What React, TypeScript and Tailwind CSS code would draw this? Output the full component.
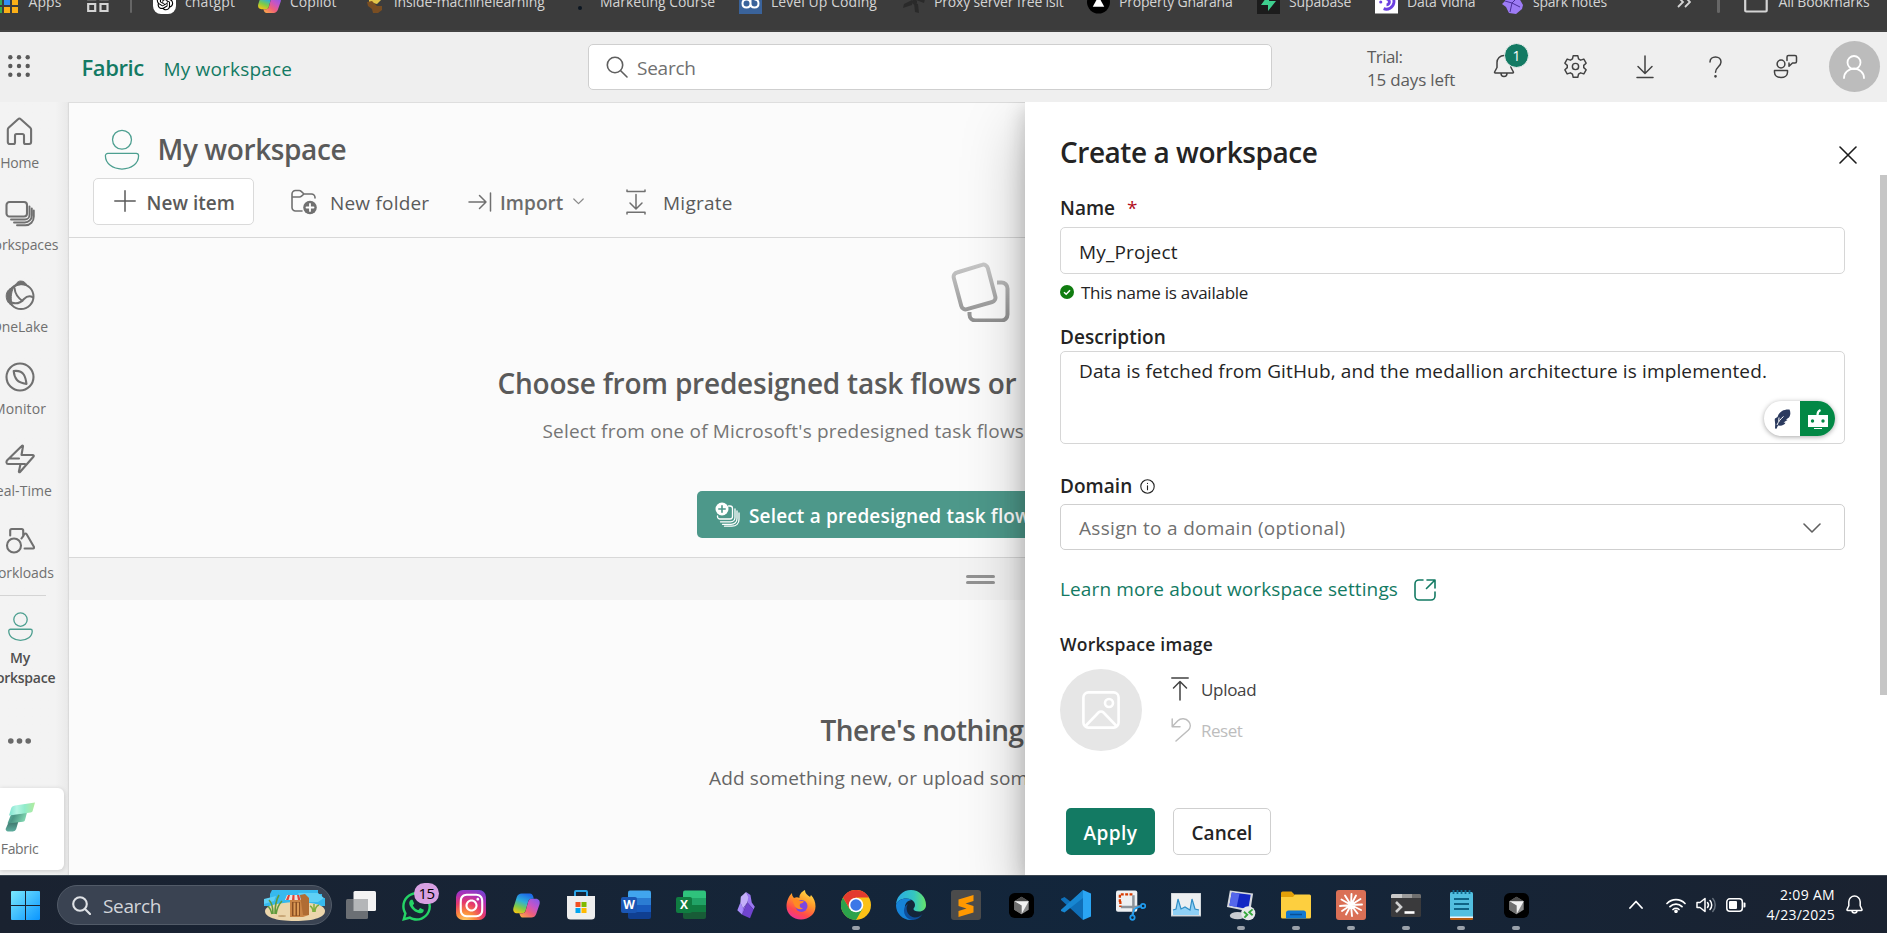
import type { ReactNode } from "react";
import { FaWhatsapp, FaInstagram } from "react-icons/fa";
import { RiOpenaiFill } from "react-icons/ri";

type IconProps = { className: string; box: string; sw?: number; children: ReactNode };

function Line({ className, box, sw = 1.5, children }: IconProps) {
  return (
    <svg className={"shrink-0 " + className} viewBox={box} fill="none" stroke="currentColor" strokeWidth={sw} strokeLinecap="round" strokeLinejoin="round">
      {children}
    </svg>
  );
}

function CopilotMark({ className, id }: { className: string; id: string }) {
  return (
    <svg className={"shrink-0 " + className} viewBox="0 0 30 30">
      <defs>
        <linearGradient id={id + "a"} x1="0.6" y1="0" x2="0.2" y2="1">
          <stop offset="0" stopColor="#1d6be8" />
          <stop offset="0.4" stopColor="#2fb0d8" />
          <stop offset="0.7" stopColor="#7ccb4a" />
          <stop offset="1" stopColor="#f3c614" />
        </linearGradient>
        <linearGradient id={id + "b"} x1="1" y1="0" x2="0.2" y2="1">
          <stop offset="0" stopColor="#7a5cf0" />
          <stop offset="0.4" stopColor="#c455c8" />
          <stop offset="0.7" stopColor="#f0607a" />
          <stop offset="1" stopColor="#f9a04c" />
        </linearGradient>
      </defs>
      <path d="M10 2.500h8.500c1.800 0 2.800 1.200 3.300 2.800l.7 2.700h-2.400c-1.800 0-2.800.9-3.300 2.700l-2.700 9.600c-.5 1.800-1.500 2.700-3.200 2.700H5.400C2.300 23 .6 20.700 1.500 17.200L5 6.200C5.800 3.700 7.700 2.500 10 2.500z" fill={"url(#" + id + "a)"} />
      <path d="M20 27.500h-8.500c-1.800 0-2.800-1.200-3.300-2.800L7.500 23h3.400c1.800 0 2.800-.9 3.300-2.700l2.700-9.600c.5-1.800 1.500-2.700 3.200-2.700h4.500c3.100 0 4.800 2.300 3.900 5.800L25 23.800c-.8 2.500-2.700 3.700-5 3.700z" fill={"url(#" + id + "b)"} />
    </svg>
  );
}

function CrystalMark({ className }: { className: string }) {
  return (
    <svg className={"shrink-0 " + className} viewBox="0 0 24 32">
      <path d="M11.500 1 5.500 6.500 5 13l3 7 5-7 2-6z" fill="#c4b0fa" />
      <path d="M11.500 1 16.500 4.500 18 13l3.500 5-1.500 3-7-8 1-6z" fill="#9a78f0" />
      <path d="M5 13 1.500 22l5.500 5 2-6z" fill="#a88bfa" />
      <path d="m13 13-6 14 9 4 4-10z" fill="#7044cf" />
      <path d="M13 13 8 20l-1 7z" fill="#8b5fe6" />
    </svg>
  );
}

function Bookmark({ label, width, tracking, icon }: { label: string; width: string; tracking: string; icon: ReactNode }) {
  return (
    <div className={"flex h-[24px] shrink-0 items-center gap-[9px] " + width}>
      <div className="flex size-[23px] shrink-0 items-center justify-center">{icon}</div>
      <span className={tracking}>{label}</span>
    </div>
  );
}

function BookmarksBar() {
  return (
    <div className="h-8 shrink-0 overflow-hidden border-b-2 border-[#444] bg-[#3c3c3c] text-[14px] leading-[24px] whitespace-nowrap text-[#d4d4d4]">
      <div className="-mt-[10px] flex h-[24px] items-center">
        <svg className="-ml-[4px] h-[22px] w-[22px] shrink-0" viewBox="0 0 22 22">
          <path d="M0 0h6v6H0zM0 8h6v6H0z" fill="#34a853" />
          <path d="M8 0h6v6H8z" fill="#ea4335" />
          <path d="M8 8h6v6H8z" fill="#2f8ff5" />
          <path d="M16 0h6v6h-6z" fill="#34a853" />
          <path d="M16 8h6v6h-6zM8 16h6v6H8zM16 16h6v6h-6z" fill="#fbaf17" />
          <path d="M0 16h6v6H0z" fill="#34a853" />
        </svg>
        <span className="ml-[10.500px] w-[58px] tracking-[0.09px]">Apps</span>
        <svg className="h-[22px] w-[22px] shrink-0" viewBox="0 0 22 22" fill="none" stroke="#d4d4d4" strokeWidth="2.200">
          <path d="M1.200 1.200h7v7h-7zM13.500 1.200h7v7h-7zM1.200 13h7v7h-7zM13.500 13h7v7h-7z" />
        </svg>
        <div className="mr-[21px] ml-[21px] h-[22px] w-[2.500px] shrink-0 rounded bg-[#666]" />
        <Bookmark label="chatgpt" width="w-[105px]" tracking="tracking-[0.11px]" icon={<div className="flex size-[23px] items-center justify-center rounded-[8px] bg-white text-black"><RiOpenaiFill size={20} /></div>} />
        <Bookmark label="Copilot" width="w-[104px]" tracking="tracking-[0.03px]" icon={<CopilotMark className="size-[25px]" id="bm" />} />
        <Bookmark label="inside-machinelearning" width="w-[206px]" tracking="tracking-[-0.08px]" icon={
          <svg className="size-[22px]" viewBox="0 0 22 22"><path d="M6 2h9l3 7-4 4-8-2z" fill="#e3c548" /><path d="m4 11 5-1 5 5 5 0 0 4-4 3-5 0-1-4-4-3z" fill="#7a4e22" /></svg>
        } />
        <Bookmark label="Marketing Course" width="w-[171px]" tracking="tracking-[-0.05px]" icon={<div className="mt-[12px] size-[4px] rounded-full bg-[#0b1622]" />} />
        <Bookmark label="Level Up Coding" width="w-[163px]" tracking="tracking-[0.06px]" icon={
          <svg className="size-[23px]" viewBox="0 0 23 23"><path d="M0 0h23v23H0z" fill="#3a639b" /><path d="M11.500 8v4.500c0 2.500-1.600 4-4 4s-4-1.500-4-4 1.600-4 4-4 4 1.500 4 4 1.600 4 4 4 4-1.500 4-4-1.600-4-4-4" fill="none" stroke="#fff" strokeWidth="2" /></svg>
        } />
        <Bookmark label="Proxy server free lsit" width="w-[185px]" tracking="tracking-[-0.18px]" icon={
          <svg className="size-[23px]" viewBox="0 0 23 23" fill="#2a2a2a"><path d="M10 9 2 13l-1 4 9-3zM12 12l1 9 4 1-1-9zM14 9l8 3 1-4-8-3z" /><circle cx="12.500" cy="11" r="2.500" /></svg>
        } />
        <Bookmark label="Property Gharana" width="w-[170px]" tracking="tracking-[-0.2px]" icon={
          <svg className="size-[24px]" viewBox="0 0 24 24"><circle cx="12" cy="12" r="12" fill="#000" /><path d="m12 6 6 11H6z" fill="#fff" /></svg>
        } />
        <Bookmark label="Supabase" width="w-[118px]" tracking="tracking-[-0.15px]" icon={
          <svg className="size-[23px]" viewBox="0 0 23 23"><path d="M0 0h23v23H0z" fill="#1c1c1c" /><path d="M12 3v7h7l-8 10v-6H4z" fill="#3ecf8e" /></svg>
        } />
        <Bookmark label="Data Vidha" width="w-[126px]" tracking="tracking-[-0.28px]" icon={
          <svg className="size-[24px]" viewBox="0 0 24 24"><path d="M0 0h24v24H0z" fill="#fff" /><path d="M12 3.500a8 8 0 1 1-3 15.500M12 9a3 3 0 1 1 0 6" fill="none" stroke="#6b3fe0" strokeWidth="3" /><circle cx="6" cy="12" r="1.600" fill="#6b3fe0" /><circle cx="9" cy="7" r="1.300" fill="#6b3fe0" /></svg>
        } />
        <Bookmark label="spark notes" width="w-[176px]" tracking="tracking-[-0.22px]" icon={
          <svg className="size-[23px]" viewBox="0 0 23 23"><path d="M9 0 4 5v5l-3 3 4 3 3 6 7 1 6-5 1-4-4-7-4-5z" fill="#9d7bf5" /><path d="m4 10 7 2 5-5M11 12l-2 9M11 12l8 4" stroke="#4a2e9a" strokeWidth="1" fill="none" /></svg>
        } />
        <svg className="h-[14px] w-[14px] shrink-0" viewBox="0 0 14 14" fill="none" stroke="#d4d4d4" strokeWidth="1.800"><path d="m1 2 5 5-5 5M8 2l5 5-5 5" /></svg>
        <div className="ml-[26px] h-[22px] w-[2.500px] shrink-0 rounded bg-[#666]" />
        <svg className="mt-[1px] mr-[11px] ml-[24px] h-[20px] w-[24px] shrink-0" viewBox="0 0 24 20" fill="none" stroke="#d4d4d4" strokeWidth="2.200"><path d="M1.200 17.500V2h8l2.500 3h11v12.500a1 1 0 0 1-1 1H2.200a1 1 0 0 1-1-1z" /></svg>
        <span className="tracking-[-0.18px]">All Bookmarks</span>
      </div>
    </div>
  );
}

function Header() {
  return (
    <header className="flex h-[70px] shrink-0 items-start bg-[#efefef] text-[19px] whitespace-nowrap">
      <svg className="mt-[23px] ml-[8px] size-[22px] shrink-0 fill-[#5a5a5a]" viewBox="0 0 22 22">
        {[2.3, 11, 19.7].map((y) => [2.3, 11, 19.7].map((x) => <circle key={x + "-" + y} cx={x} cy={y} r="2.200" />))}
      </svg>
      <span className="mt-[21px] ml-[51.500px] w-[82px] text-[22px] leading-[28px] font-semibold tracking-[-0.4px] text-[#137a63]">Fabric</span>
      <span className="mt-[25px] w-[424.500px] leading-[24px] tracking-[0.18px] text-[#137a63]">My workspace</span>
      <div className="mt-[12px] flex h-[46px] w-[684px] shrink-0 items-center rounded-[5px] border border-[#cfcfcf] bg-white">
        <Line className="ml-[17px] size-[22px] text-[#5f5f5f]" box="0 0 22 22" sw={1.6}><circle cx="9" cy="9" r="7.700" /><path d="m14.700 14.700 6.300 6.300" /></Line>
        <span className="ml-[9px] pt-px leading-[24px] tracking-[-0.24px] text-[#707070]">Search</span>
      </div>
      <div className="mt-[13px] ml-[95px] w-[126px] text-[17px] leading-[23px] text-[#5c5c5c]">
        <div className="tracking-[-0.55px]">Trial:</div>
        <div className="tracking-[-0.18px]">15 days left</div>
      </div>
      <div className="relative mt-[22px] h-[24px] w-[22px] shrink-0">
        <Line className="h-[24px] w-[22px] text-[#424242]" box="0 0 22 24"><path d="M11 1.500a7 7 0 0 0-7 7v5L1.600 18a.7.7 0 0 0 .6 1h17.600a.7.7 0 0 0 .6-1L18 13.500v-5a7 7 0 0 0-7-7zM8 19.200c0 2 1.300 3.300 3 3.300s3-1.300 3-3.300" /></Line>
        <span className="absolute -top-[11px] left-[11px] flex size-[25px] items-center justify-center rounded-full border border-[#efefef] bg-[#137a63] text-[14px] leading-none text-white">1</span>
      </div>
      <Line className="mt-[22px] ml-[47.500px] size-[25px] text-[#424242]" box="0 0 24 24" sw={1.4}>
        <path d="M9.800 1.600 L14.200 1.600 L14.900 4.700 L16.900 5.900 L20 4.900 L22.200 8.800 L19.900 10.900 L19.900 13.100 L22.200 15.200 L20 19.100 L16.900 18.100 L14.900 19.300 L14.200 22.400 L9.800 22.400 L9.100 19.300 L7.100 18.100 L4 19.100 L1.800 15.200 L4.100 13.100 L4.100 10.900 L1.800 8.800 L4 4.900 L7.100 5.900 L9.100 4.700z" />
        <circle cx="12" cy="12" r="3" />
      </Line>
      <Line className="mt-[23px] ml-[48px] h-[24px] w-[18px] text-[#424242]" box="0 0 18 24"><path d="M9 1v17M2 11.500l7 7 7-7M1 22.500h16" /></Line>
      <Line className="mt-[24px] ml-[55px] h-[22px] w-[13px] text-[#424242]" box="0 0 13 22"><path d="M1 6c0-3 2.300-5 5.500-5S12 3 12 6c0 4.500-5.500 5-5.500 10.200" /><circle cx="6.500" cy="20.300" r=".6" fill="currentColor" /></Line>
      <Line className="mt-[22px] ml-[51px] size-[25px] text-[#424242]" box="0 0 25 25"><circle cx="8" cy="10" r="3.900" /><path d="M1.500 16.500h13v1.700c0 3.400-3 5.300-6.500 5.300s-6.500-1.900-6.500-5.300zM14 6.500V3a1.500 1.500 0 0 1 1.500-1.500H22A1.500 1.500 0 0 1 23.500 3v4.500A1.500 1.500 0 0 1 22 9h-2.500L16 12.300V9" /></Line>
      <div className="mt-[9px] ml-[31px] flex size-[51px] shrink-0 items-center justify-center rounded-full bg-[#bcbcbc]">
        <Line className="h-[24px] w-[22px] text-white" box="0 0 22 24" sw={1.8}><circle cx="11" cy="7.500" r="6.500" /><path d="M1 23a10 9.500 0 0 1 20 0" /></Line>
      </div>
    </header>
  );
}

function PersonIcon({ className, sw }: { className: string; sw: number }) {
  return (
    <Line className={className} box="0 0 36 42" sw={sw}>
      <circle cx="18" cy="11" r="9.700" />
      <path d="M3.500 25h29a2.500 2.500 0 0 1 2.500 2.500C35 35.500 27.500 41 18 41S1 35.500 1 27.500A2.500 2.500 0 0 1 3.500 25z" />
    </Line>
  );
}

function NavItem({ label, tracking, children }: { label: string; tracking: string; children: ReactNode }) {
  return (
    <div className="flex h-[82px] w-[39px] shrink-0 flex-col items-center pt-[14px] whitespace-nowrap text-[#707070]">
      <div className="flex size-[30px] shrink-0 items-center justify-center">{children}</div>
      <span className={"mt-[6.500px] text-[14px] leading-[20px] " + tracking}>{label}</span>
    </div>
  );
}

function Sidebar() {
  return (
    <nav className="flex w-[69px] shrink-0 flex-col bg-gradient-to-r from-[#f3f3f3] from-80% to-[#e9e9e9]">
      <NavItem label="Home" tracking="tracking-[-0.27px]">
        <Line className="size-[29px]" box="0 0 29 29" sw={2.1}><path d="M13 2.200a2 2 0 0 1 2.800 0l9.500 8.600a2.500 2.500 0 0 1 .8 1.900V25a2 2 0 0 1-2 2h-3.600a1.500 1.500 0 0 1-1.500-1.500v-7a1.500 1.500 0 0 0-1.500-1.500h-6a1.500 1.500 0 0 0-1.500 1.500v7A1.500 1.500 0 0 1 8.500 27H4.800a2 2 0 0 1-2-2V12.700c0-.7.300-1.400.8-1.900z" /></Line>
      </NavItem>
      <NavItem label="Workspaces" tracking="tracking-[-0.13px]">
        <Line className="size-[30px]" box="0 0 30 30" sw={2.1}><rect x="1.500" y="4" width="20.500" height="14.500" rx="3" /><path d="M24.500 8.500V17a4.500 4.500 0 0 1-4.500 4.500H6M26.800 10.500v7a7 7 0 0 1-7 7H9M28.800 12.500v6c0 5-3.500 8.700-8.500 8.700H12" strokeWidth="1.900" /></Line>
      </NavItem>
      <NavItem label="OneLake" tracking="tracking-[-0.09px]">
        <Line className="size-[30px]" box="0 0 30 30" sw={2}>
          <circle cx="16" cy="16.500" r="12.500" />
          <path d="M9.500 7C11 3 13 1 15.500 1c3.500 0 5.500 2 6.500 4.500-5-1.500-9-1-12.500 1.500z" fill="currentColor" strokeWidth="1" />
          <path d="M8.500 7.500C5 7.500 1.200 11 1.200 16c0 4.500 2.300 8 6 9.500-1.500-6-1.500-12 1.300-18z" fill="currentColor" strokeWidth="1" />
          <path d="M9.500 8c.5 5.500 3 9.500 8 13M6.500 22.500c5 2 9 .5 12.500-3.500 3-3 6-3.500 9-1.500" />
        </Line>
      </NavItem>
      <NavItem label="Monitor" tracking="tracking-[0.1px]">
        <Line className="size-[30px]" box="0 0 30 30" sw={2.1}><circle cx="15" cy="15" r="13.500" /><path d="M8.700 9c5-.6 8.300 1 10 3.500 1.400 2 2.200 5 2.800 9.500-4.500-.8-7.500-1.800-9.500-4C10.200 16 9 13 8.700 9z" /></Line>
      </NavItem>
      <NavItem label="Real-Time" tracking="tracking-[0.07px]">
        <Line className="size-[30px]" box="0 0 30 30" sw={2.1}><path d="M17 1.800c.5-.5 1-.2 1 .4L16.500 11h11c1.200 0 1.600.9.900 1.700L15 28c-.5.500-1.200.2-1.100-.5L15.500 20M17 1.800 2.200 16.300C1 17.600 1.300 20 3 20h17M4.500 14.500h9.500" /></Line>
      </NavItem>
      <NavItem label="Workloads" tracking="tracking-[-0.05px]">
        <Line className="size-[30px]" box="0 0 30 30" sw={2.1}><circle cx="9" cy="19.500" r="7" /><path d="M5.200 9.500V4.500A1.500 1.500 0 0 1 6.700 3h10a1.500 1.500 0 0 1 1.500 1.500v6M16.500 12.500l3-4.500a1.200 1.200 0 0 1 2 0L29 21a1 1 0 0 1-.9 1.500h-8.500" /></Line>
      </NavItem>
      <div className="mt-[1px] h-px w-[46px] shrink-0 bg-[#d4d4d4]" />
      <div className="flex w-[40px] shrink-0 flex-col items-center pt-[16px] whitespace-nowrap text-[#4f4f4f]">
        <PersonIcon className="h-[29px] w-[25px] text-[#4d9f90]" sw={1.9} />
        <span className="mt-[6.500px] text-[14px] leading-[20px] font-semibold tracking-[-0.24px]">My</span>
        <span className="text-[14px] leading-[20px] font-semibold tracking-[-0.24px]">workspace</span>
      </div>
      <svg className="mt-[49px] ml-[7px] h-[8px] w-[25px] shrink-0 fill-[#6a6a6a]" viewBox="0 0 25 8"><circle cx="3.800" cy="4" r="2.800" /><circle cx="12.500" cy="4" r="2.800" /><circle cx="21.200" cy="4" r="2.800" /></svg>
      <div className="mt-[43.500px] flex h-[82px] w-[64px] shrink-0 flex-col rounded-r-[6px] bg-white shadow-[0_1px_5px_rgba(0,0,0,0.18)]">
        <div className="flex w-[39px] flex-col items-center pt-[14px] text-[#707070]">
          <svg className="h-[30px] w-[30px]" viewBox="0 0 30 30">
            <defs>
              <linearGradient id="fa" x1="0" y1="0" x2="1" y2="0"><stop offset="0" stopColor="#7de3cf" /><stop offset=".3" stopColor="#b5f5e4" /><stop offset=".6" stopColor="#90ebcb" /><stop offset="1" stopColor="#b2eb9c" /></linearGradient>
              <linearGradient id="fb" x1="0" y1="0" x2="1" y2="0.3"><stop offset="0" stopColor="#5fb5a3" /><stop offset=".4" stopColor="#4c9686" /><stop offset="1" stopColor="#80d6b0" /></linearGradient>
              <linearGradient id="fc" x1="0" y1="0" x2="0" y2="1"><stop offset="0" stopColor="#3b7068" /><stop offset="1" stopColor="#5fae9f" /></linearGradient>
            </defs>
            <path d="M3.500 20.500 13.500 19l-2.300 8a3.500 3.500 0 0 1-3.300 2.500H3A2.300 2.300 0 0 1 .8 26.500z" fill="url(#fc)" />
            <path d="M6 12.500 22 10.500l-2 7.500c-.3 1-1 1.500-2 1.700L2.500 21.500z" fill="url(#fb)" />
            <path d="M10 3.500 30 .5l-2.300 8.300c-.3 1-1 1.700-2.200 1.800L4 13.500l2-6.800C6.500 5 7.800 3.900 10 3.500z" fill="url(#fa)" />
          </svg>
          <span className="mt-[6.500px] text-[14px] leading-[20px] tracking-[-0.34px]">Fabric</span>
        </div>
      </div>
    </nav>
  );
}

function Workspace() {
  return (
    <main className="flex min-w-0 flex-1 flex-col overflow-hidden border-t border-[#dedede] bg-[#fbfbfb] text-[19px] leading-[24px] whitespace-nowrap text-[#5a5a5a] shadow-[0_0_2px_rgba(0,0,0,0.2)]">
      <div className="flex h-[75px] shrink-0 items-start">
        <PersonIcon className="mt-[25.500px] ml-[35px] h-[41px] w-[36px] text-[#4d9f90]" sw={1.3} />
        <h1 className="mt-[28px] ml-[17.500px] text-[28px] leading-[36px] font-semibold tracking-[-0.4px]">My workspace</h1>
      </div>
      <div className="flex h-[60px] shrink-0 items-start border-b border-[#d8d8d8]">
        <button className="ml-[24px] flex h-[47px] w-[161px] shrink-0 items-center rounded-[5px] border border-[#dadada] bg-white pl-[20px]">
          <Line className="-mt-px size-[22px]" box="0 0 22 22" sw={1.5}><path d="M11 .8v20.400M.8 11h20.400" /></Line>
          <span className="ml-[10.500px] pt-[2px] font-semibold tracking-[0.03px]">New item</span>
        </button>
        <div className="flex h-[47px] items-center">
          <Line className="ml-[37px] mt-px h-[26px] w-[26px] text-[#707070]" box="0 0 26 26" sw={1.6}>
            <path d="M11 22H4.500A3.500 3.500 0 0 1 1 18.500V5a3.500 3.500 0 0 1 3.500-3.500h3.700a3 3 0 0 1 2 .8L13 5h7.500A3.500 3.500 0 0 1 24 8.500V9M1 8h7.500a3 3 0 0 0 2-.8L13 5" />
            <circle cx="19" cy="18.500" r="6.800" fill="currentColor" stroke="none" /><path d="M19 15v7M15.500 18.500h7" stroke="#fff" strokeWidth="1.800" />
          </Line>
          <span className="ml-[13px] w-[137.500px] pt-[2px] tracking-[0.2px]">New folder</span>
          <Line className="h-[20px] w-[24px] text-[#707070]" box="0 0 24 20" sw={1.5}><path d="M1 10h17M11.500 3.500 18 10l-6.500 6.500M22.500 1v18" /></Line>
          <span className="ml-[8.500px] w-[72.500px] pt-[2px] font-semibold tracking-[0.05px] text-[#6c6c6c]">Import</span>
          <Line className="h-[7px] w-[11px] text-[#8a8a8a]" box="0 0 11 7" sw={1.2}><path d="m.8 1 4.700 4.700L10.200 1" /></Line>
          <Line className="ml-[42.500px] h-[26px] w-[20px] text-[#707070]" box="0 0 20 26" sw={1.5}><path d="M1 1v1.500h18V1M10 5.500v14M4 14l6 6 6-6M1 25v-1.800h18V25" /></Line>
          <span className="ml-[17px] pt-[2px] tracking-[0.25px]">Migrate</span>
        </div>
      </div>
      <section className="flex h-[320px] shrink-0 flex-col items-start border-b border-[#d8d8d8]">
        <svg className="mt-[24px] ml-[880.500px] h-[60px] w-[60px] shrink-0" viewBox="0 0 60 60" fill="none" strokeWidth="4" strokeLinecap="butt">
          <defs><linearGradient id="st" x1="0" y1="0" x2="0" y2="60" gradientUnits="userSpaceOnUse"><stop offset="0" stopColor="#c9c9c9" /><stop offset="1" stopColor="#8f8f8f" /></linearGradient></defs>
          <path d="M7 10.500 32 2.800a4.500 4.500 0 0 1 5.800 3.200l7.500 28.500a4.500 4.500 0 0 1-3.100 5.500L17 47.200a4.500 4.500 0 0 1-5.700-3.200L3.800 16a4.500 4.500 0 0 1 3.200-5.500z" stroke="url(#st)" />
          <path d="M47 20.500h4.500a6 6 0 0 1 6 6v26a6 6 0 0 1-6 6h-26a6 6 0 0 1-6-6V50" stroke="url(#st)" />
        </svg>
        <h2 className="mt-[43px] ml-[428.500px] text-[28px] leading-[36px] font-semibold tracking-[-0.22px]">Choose from predesigned task flows or</h2>
        <p className="mt-[17.500px] ml-[473.500px] tracking-[0.18px] text-[#757575]">Select from one of Microsoft's predesigned task flows</p>
        <button className="mt-[48.500px] ml-[628px] flex h-[47px] w-[380px] shrink-0 items-center rounded-[5px] bg-[#4d988a] pl-[18px] text-white">
          <Line className="size-[25px]" box="0 0 25 25" sw={1.5}>
            <path d="M13.500 4H15a2.500 2.500 0 0 1 2.500 2.500v8A2.500 2.500 0 0 1 15 17H5a2.500 2.500 0 0 1-2.500-2.500V14M20 7v8.500c0 2.500-2 4.300-4.500 4.300H5.500M22 9v7.500c0 3.500-2.500 5.800-6 5.800H7.500M24 11v6.500c0 4-2.800 6.700-7 6.700H9.500" strokeWidth="1.300" />
            <circle cx="7" cy="7" r="6.500" fill="#fff" stroke="none" /><path d="M7 3.800v6.400M3.800 7h6.400" stroke="#4d988a" strokeWidth="1.600" />
          </Line>
          <span className="ml-[9px] pt-[2px] font-semibold tracking-[0.16px]">Select a predesigned task flow</span>
        </button>
      </section>
      <div className="h-[42px] shrink-0 bg-[#f3f3f3] pt-[17px] pl-[897px]">
        <div className="h-[3px] w-[29px] rounded bg-[#929292]" />
        <div className="mt-[3px] h-[3px] w-[29px] rounded bg-[#929292]" />
      </div>
      <section className="flex flex-1 flex-col items-start">
        <h2 className="mt-[112px] ml-[751.500px] text-[28px] leading-[36px] font-semibold tracking-[-0.5px]">There's nothing</h2>
        <p className="mt-[17.500px] ml-[640px] tracking-[0.14px] text-[#666]">Add something new, or upload some</p>
      </section>
    </main>
  );
}

function CreatePanel() {
  return (
    <aside className="absolute inset-y-0 right-0 flex w-[862px] bg-white text-[19px] leading-[24px] whitespace-nowrap text-[#242424] shadow-[0_26px_58px_rgba(0,0,0,0.26),0_6px_20px_rgba(0,0,0,0.2)]">
      <div className="flex w-[820px] flex-col pl-[35px]">
        <div className="mt-[32px] flex h-[36px] items-center">
          <h2 className="flex-1 text-[28px] leading-[36px] font-semibold tracking-[-0.46px]">Create a workspace</h2>
          <Line className="mt-[6px] -mr-[12px] size-[18px] text-[#1c1c1c]" box="0 0 18 18" sw={1.6}><path d="m1 1 16 16M17 1 1 17" /></Line>
        </div>
        <label className="mt-[26px] flex h-[24px] font-semibold">Name<span className="ml-[12px] font-normal text-[#b10e1c]">*</span></label>
        <div className="mt-[7px] flex h-[47px] items-center rounded-[5px] border border-[#d6d6d6] pt-[2px] pl-[18px] tracking-[0.18px]">My_Project</div>
        <div className="mt-[6px] flex h-[24px] items-center">
          <svg className="size-[14px] shrink-0" viewBox="0 0 14 14"><circle cx="7" cy="7" r="7" fill="#107c10" /><path d="m4 7.200 2.200 2.100L10 5.300" fill="none" stroke="#fff" strokeWidth="1.500" /></svg>
          <span className="ml-[7px] pt-px text-[17px] tracking-[-0.25px]">This name is available</span>
        </div>
        <label className="mt-[21px] h-[24px] font-semibold tracking-[0.04px]">Description</label>
        <div className="mt-[2px] flex h-[93px] flex-col rounded-[5px] border border-[#d6d6d6] pt-[7px] pl-[18px]">
          <span className="tracking-[0.135px]">Data is fetched from GitHub, and the medallion architecture is implemented.</span>
          <div className="mt-[18px] mr-[9px] flex h-[35px] w-[71px] shrink-0 self-end overflow-hidden rounded-full bg-white shadow-[0_1px_5px_rgba(0,0,0,0.35)]">
            <div className="flex w-[36px] items-center justify-center">
              <svg className="h-[20px] w-[17px]" viewBox="0 0 17 20"><path d="M15.500.5C10 0 5 2.500 3.500 8L1 9.500c-.7 2 .2 3.500.2 5.500L1 19.500l1.500.2 1.500-3.200c4 .5 6.500-.5 7.500-2.700l-2-.3 4-2.500-1.500-.5 3-2C16.700 6 16.700 3 15.500.5z" fill="#2b3a5e" /><path d="M9.500 7.500C6.500 10 4.500 12.500 3 16M5 8.500l-.3 4" fill="none" stroke="#fff" strokeWidth="1" /></svg>
            </div>
            <div className="flex w-[35px] items-center justify-center bg-[#028845]">
              <svg className="h-[20px] w-[20px]" viewBox="0 0 20 20"><path d="M0 6h20v12H0z" fill="#fff" /><path d="M9.500 6c0-2.500.8-4 3-5" fill="none" stroke="#fff" strokeWidth="2.200" /><path d="M6 19.500h8" stroke="#fff" strokeWidth="1" /><circle cx="4.500" cy="12" r="1.700" fill="#028845" /><circle cx="15" cy="12" r="1.700" fill="#028845" /></svg>
            </div>
          </div>
        </div>
        <label className="mt-[30px] flex h-[24px] items-center font-semibold tracking-[0.05px]">
          Domain
          <Line className="ml-[8px] size-[15px]" box="0 0 15 15" sw={1.1}><circle cx="7.500" cy="7.500" r="6.700" /><path d="M7.500 6.800v4M7.500 4.300v.2" /></Line>
        </label>
        <div className="mt-[6px] flex h-[46px] items-center justify-between rounded-[5px] border border-[#cfcfcf] pt-px pr-[23px] pl-[18px] tracking-[0.31px] text-[#707070]">
          Assign to a domain (optional)
          <Line className="h-[10px] w-[18px] text-[#606060]" box="0 0 18 10" sw={1.6}><path d="m1 1 8 8 8-8" /></Line>
        </div>
        <a className="mt-[27px] flex h-[24px] items-center tracking-[0.12px] text-[#137a63]">
          Learn more about workspace settings
          <Line className="mt-[2px] ml-[16px] size-[22px]" box="0 0 22 22" sw={1.6}><path d="M9 1H5a4 4 0 0 0-4 4v12a4 4 0 0 0 4 4h12a4 4 0 0 0 4-4v-4M13 1h8v8M21 1l-8.500 8.500" /></Line>
        </a>
        <div className="mt-[31px] h-[24px] text-[17.500px] font-semibold tracking-[0.26px]">Workspace image</div>
        <div className="mt-[13px] flex h-[82px] items-start">
          <div className="flex size-[82px] items-center justify-center rounded-full bg-[#e6e6e6]">
            <Line className="size-[38px] text-white" box="0 0 38 38" sw={2.6}><rect x="1.400" y="1.400" width="35.200" height="35.200" rx="5" /><circle cx="27" cy="12" r="4" /><path d="M3.500 35 16.500 21.500a3.500 3.500 0 0 1 5 0L34.500 35" /></Line>
          </div>
          <div className="ml-[29px] text-[17px]">
            <div className="mt-[7px] flex h-[26px] items-center text-[#424242]">
              <Line className="h-[24px] w-[18px]" box="0 0 18 24"><path d="M.8 1h16.400M9 4.500V23M2.500 11 9 4.500l6.500 6.500" /></Line>
              <span className="ml-[12px] pt-px tracking-[-0.3px]">Upload</span>
            </div>
            <div className="mt-[15px] flex h-[26px] items-center text-[#bdbdbd]">
              <Line className="h-[24px] w-[20px]" box="0 0 20 24"><path d="M1.200 1v7.700H9M1.500 8.200l5.300-5.400c3-3 8.200-2.500 10.900.7 2.200 2.700 2 6.300-.5 8.800L5 23" /></Line>
              <span className="ml-[10px] pt-px tracking-[-0.5px]">Reset</span>
            </div>
          </div>
        </div>
        <div className="mt-[57px] flex pl-[6px] font-semibold">
          <button className="h-[47px] w-[89px] rounded-[5px] bg-[#137a63] pt-[2px] tracking-[0.46px] text-white">Apply</button>
          <button className="ml-[18px] h-[47px] w-[98px] rounded-[5px] border border-[#cfcfcf] bg-white pt-[2px] tracking-[0px]">Cancel</button>
        </div>
      </div>
      <div className="mt-[73px] ml-auto h-[520px] w-[7px] bg-[#c6c6c6]" />
    </aside>
  );
}

function Slot({ active, children }: { active?: boolean; children: ReactNode }) {
  return (
    <div className="flex h-[57px] w-[55px] shrink-0 flex-col items-center pt-[14px]">
      <div className="flex size-[30px] shrink-0 items-center justify-center">{children}</div>
      {active ? <div className="mt-[5.500px] h-[4px] w-[8px] rounded-full bg-[#9aa1aa]" /> : null}
    </div>
  );
}

function OfficeMark({ letter, a, b, c, d, tile }: { letter: string; a: string; b: string; c: string; d: string; tile: string }) {
  return (
    <svg className="size-[30px]" viewBox="0 0 30 30">
      <path d="M9 -1.500h19a2 2 0 0 1 2 2v7.500H7V.5a2 2 0 0 1 2-2z" transform="translate(0 2)" fill={a} />
      <path d="M7 8h23v7H7z" fill={b} />
      <path d="M7 15h23v7H7z" fill={c} />
      <path d="M7 22h23v5a2 2 0 0 1-2 2H9a2 2 0 0 1-2-2z" fill={d} />
      <rect x="0" y="7" width="16" height="16" rx="2" fill={tile} />
      <text x="8" y="19.200" textAnchor="middle" fontFamily="Open Sans, sans-serif" fontWeight="700" fontSize="12" fill="#fff">{letter}</text>
    </svg>
  );
}

function CursorMark() {
  return (
    <svg className="size-[25px]" viewBox="0 0 26 26">
      <rect width="26" height="26" rx="6" fill="#000" />
      <path d="m13 4 7.500 4.500v9L13 22l-7.500-4.500v-9z" fill="#8b8b8b" />
      <path d="m13 4 7.500 4.500-7.500.5-7.500-.5z" fill="#4a4a4a" />
      <path d="M5.500 8.500h15L13 22v-9z" fill="#f2f2f2" />
      <path d="M5.500 8.500 13 13v9l-7.500-4.500z" fill="#6f6f6f" />
    </svg>
  );
}

function Taskbar() {
  return (
    <footer className="flex h-[58px] shrink-0 items-start border-t border-[#3b4650] bg-gradient-to-r from-[#1a2230] via-[#12263c] via-60% to-[#1a2230] whitespace-nowrap">
      <svg className="mt-[15px] ml-[11px] size-[29px] shrink-0" viewBox="0 0 29 29">
        <defs><linearGradient id="win" x1="0" y1="0" x2="1" y2="1"><stop offset="0" stopColor="#7ae9fd" /><stop offset="1" stopColor="#0a95ff" /></linearGradient></defs>
        <path d="M1 0h13v14H0V1a1 1 0 0 1 1-1zM15 0h13a1 1 0 0 1 1 1v13H15zM0 15h14v14H1a1 1 0 0 1-1-1zM15 15h14v13a1 1 0 0 1-1 1H15z" fill="url(#win)" />
      </svg>
      <div className="mt-[9px] ml-[17px] flex h-[40px] w-[275px] shrink-0 items-center rounded-full border border-[#525b68] bg-[#3a4352]">
        <Line className="ml-[14px] size-[19px] text-[#dfe2e6]" box="0 0 19 19" sw={2.1}><circle cx="8" cy="8" r="6.800" /><path d="m13 13 5 5" /></Line>
        <span className="ml-[12px] flex-1 pt-px text-[19px] leading-[24px] tracking-[-0.35px] text-[#d2d5da]">Search</span>
        <svg className="mr-[6px] h-[32px] w-[61px]" viewBox="0 0 61 32">
          <path d="M8 1h46v4h4v4H61v8H0v-6l6-2V5z" fill="#36b9ee" />
          <path d="M0 10 12 7l-2 5-10 3zM34 4h20l6 5-6 4H38z" fill="#5fd0f5" />
          <path d="M1 22c0-5 10-8 30-9 18 0 30 3 30 9 0 6-10 10-30 10S1 28 1 22z" fill="#ecd6ac" />
          <path d="M26 10h15l4 3v13l-6 2H26z" fill="#c98445" /><path d="M28 13h8v14h-8z" fill="#8a4f22" /><path d="M29.500 13.500h2v13h-2zM33 13.500h2v13h-2z" fill="#dc9a55" /><path d="m36 6 5-1 4 4v17h-6z" fill="#b06c33" />
          <path d="M23 6h12l2 5H21z" fill="#e9e4de" /><path d="m24 6-2 5h2.500l1.500-5zM28.500 6 28 11h2.500V6zM33 6l1 5h2.500L35 6z" fill="#e24438" />
          <path d="M9 25C9 18 7 13 5 11M11 25c0-8 1-14 4-19M12 25c1-6 3-10 6-13M8 25c-1-4-2-6-4-8" stroke="#5f9b3c" strokeWidth="1.600" fill="none" />
          <path d="M49 23c0-3-1-5-3-6M51 23c0-4 1-6 4-7M50 23v-8" stroke="#7fae3e" strokeWidth="1.500" fill="none" />
          <ellipse cx="18" cy="27" rx="4" ry="1" fill="#c9a777" />
        </svg>
      </div>
      <div className="ml-[1.500px] flex">
        <Slot><svg className="size-[30px]" viewBox="0 0 30 30"><rect x="7.500" y="1" width="22.500" height="20" rx="1.500" fill="#f3f3f3" /><rect x="0" y="9" width="22" height="20" rx="1.500" fill="#6b6f74" /><path d="M7.500 9H22v12H7.500z" fill="#b4b6b8" /></svg></Slot>
        <Slot>
          <div className="relative size-[30px]">
            <FaWhatsapp size={33} className="-ml-[1px] text-[#25d366]" />
            <span className="absolute -top-[7px] left-[13px] flex h-[21px] w-[25px] items-center justify-center rounded-full bg-[#d8a1e2] text-[15px] leading-none tracking-[-0.5px] text-black">15</span>
          </div>
        </Slot>
        <Slot><div className="flex size-[30px] items-center justify-center rounded-[7px] bg-[radial-gradient(circle_at_30%_105%,#fdd26b_0%,#fb8c3c_25%,#e73a6a_50%,#b02fb5_72%,#5c4bdc_100%)] text-white"><FaInstagram size={27} /></div></Slot>
        <Slot><CopilotMark className="size-[29px]" id="tb" /></Slot>
        <Slot><svg className="size-[30px]" viewBox="0 0 30 30"><path d="M9 6V2a1 1 0 0 1 1-1h10a1 1 0 0 1 1 1v4" fill="none" stroke="#29a3e6" strokeWidth="2" /><path d="M1 6h28v20a3.500 3.500 0 0 1-3.500 3.500h-21A3.500 3.500 0 0 1 1 26z" fill="#eeeeee" /><path d="M9.500 12h5v5h-5z" fill="#f25022" /><path d="M15.500 12h5v5h-5z" fill="#7fba00" /><path d="M9.500 18h5v5h-5z" fill="#00a4ef" /><path d="M15.500 18h5v5h-5z" fill="#ffb900" /></svg></Slot>
        <Slot><OfficeMark letter="W" a="#41a5ee" b="#2b7cd3" c="#185abd" d="#103f91" tile="#1a56b4" /></Slot>
        <Slot><OfficeMark letter="X" a="#2fc27c" b="#21a366" c="#107c41" d="#185c37" tile="#107c41" /></Slot>
        <Slot><CrystalMark className="h-[28px] w-[21px]" /></Slot>
        <Slot>
          <svg className="size-[30px]" viewBox="0 0 30 30">
            <defs><linearGradient id="ff" x1="0.800" y1="0" x2="0.300" y2="1"><stop offset="0" stopColor="#ffe14a" /><stop offset=".4" stopColor="#ff9a2a" /><stop offset=".75" stopColor="#ff4a4a" /><stop offset="1" stopColor="#f0309a" /></linearGradient></defs>
            <path d="M6 3c0 2 .5 3.500 2 5 2-1 4-.8 5.500 0C13 5 15 2 19 0c0 4 3 5 5 7l1-2c3 3 4.500 7 4.500 11.500C29.500 24 23 29.500 15 29.500S.5 24 .5 16C.5 11 3 6 6 3z" fill="url(#ff)" />
            <circle cx="15.500" cy="16" r="6" fill="#7b46e0" /><path d="M6 9c3-1 6 0 8 2 2 0 3.500 0 4 .5-1 1.500-3 2-4 2.500-1 3 1 4 3 4.500-3 2-8 0-9-4z" fill="#ff8a24" />
          </svg>
        </Slot>
        <Slot active>
          <svg className="size-[30px]" viewBox="0 0 30 30">
            <circle cx="15" cy="15" r="15" fill="#fbc116" />
            <path d="M2 7.500A15 15 0 0 0 15 30l6.500-11.300L15 15 8.500 18.700z" fill="#2ba24c" />
            <path d="M2 7.500A15 15 0 0 1 28 7.500H15L8.500 18.700z" fill="#e33b2e" />
            <circle cx="15" cy="15" r="7.300" fill="#fff" /><circle cx="15" cy="15" r="5.700" fill="#3b78e7" />
          </svg>
        </Slot>
        <Slot>
          <svg className="size-[30px]" viewBox="0 0 30 30">
            <defs><linearGradient id="ed" x1="0" y1="0.300" x2="1" y2="0.300"><stop offset="0" stopColor="#2aa9e6" /><stop offset=".6" stopColor="#35c6c0" /><stop offset="1" stopColor="#66e36a" /></linearGradient></defs>
            <path d="M0 15a15 15 0 1 1 30 0c0 4-3 6.500-7 6.500-3.500 0-5.500-1-5.500-2.500 0-1 1.500-1.500 1.500-4 0-3.500-3.500-6.500-8.500-6.500C5 8.500 1 11 0 15z" fill="url(#ed)" />
            <path d="M0 15c1-4 5-6.500 10.500-6.500 2 0 3.500.5 5 1.500C10 11 8.500 15 9 19c.6 4.500 4 8.500 9 9.500-1 1-2 1.500-3.500 1.500A14.800 14.800 0 0 1 0 15z" fill="#1683d8" />
            <path d="M12 14c-3.500 5 0 13 7 13.500 3 0 6-1.500 7.800-4C23 30 17 31 13 29 7 26 6 17 12 14z" fill="#0d4f9c" />
          </svg>
        </Slot>
        <Slot><svg className="size-[30px]" viewBox="0 0 30 30"><rect width="30" height="30" rx="3" fill="#4b4b4b" /><path d="M22.500 5v6l-8 2.500 8 2.500v6.500l-15 4.500v-6l8-2.500-8-2.500V9.500z" fill="#ff9800" /></svg></Slot>
        <Slot><CursorMark /></Slot>
        <Slot><svg className="size-[30px]" viewBox="0 0 30 30"><path d="M22 0 10 12 3.500 7 0 8.800v1L22 30z" fill="#0f6fb8" /><path d="M22 0v8L3.500 22.500 0 21v-1.200z" fill="#1787d2" /><path d="m22 0 8 3.500v23L22 30z" fill="#2aa5f3" /></svg></Slot>
        <Slot><svg className="size-[31px]" viewBox="0 0 31 31"><rect width="22" height="22" rx="2" fill="#eef0f2" /><path d="M4 12V4h14" fill="none" stroke="#d83b01" strokeWidth="2.400" strokeDasharray="3 1.500" /><path d="M18 5v12M5 17h13" stroke="#8d949b" strokeWidth="2.600" /><path d="M4.500 11v6" stroke="#d83b01" strokeWidth="2.400" strokeDasharray="3 1.500" /><path d="m18 17 8.500-1M18 17l-1 9" stroke="#8d949b" strokeWidth="2" /><circle cx="28" cy="16" r="2.300" fill="none" stroke="#1f9cf0" strokeWidth="1.800" /><circle cx="17" cy="28" r="2.300" fill="none" stroke="#1f9cf0" strokeWidth="1.800" /><path d="m19 19 7-3M19 19l-2 7" stroke="#1f9cf0" strokeWidth="1.800" /></svg></Slot>
        <Slot><svg className="h-[24px] w-[30px]" viewBox="0 0 30 24"><rect width="30" height="23" fill="#eceff1" stroke="#b9c0c6" /><path d="m2 17 3-1L7 6l3 10 4-2 5 3 2-11 3 10 4 1v5H2z" fill="#8fd0f5" /><path d="m2 17 3-1L7 6l3 10 4-2 5 3 2-11 3 10 4 1" fill="none" stroke="#2f8ec6" strokeWidth="1.200" /></svg></Slot>
        <Slot active><svg className="size-[31px]" viewBox="0 0 31 31"><path d="m4 0 24 3-3 19L1 17z" fill="#d5d8de" /><path d="m6 2 19.500 2.500-2.500 15L3.500 15.500z" fill="#1226c4" /><path d="m6 2 8 1-3 14-7.500-1.500z" fill="#5567ea" /><ellipse cx="12" cy="26" rx="8" ry="3.800" fill="#c9ccd2" /><circle cx="23" cy="23.500" r="7.300" fill="#e6e8ea" /><path d="m18.500 22 3.500 3-3 3M27.500 19.500l-3.500 3 3.500 3" fill="none" stroke="#35a83c" strokeWidth="1.900" /></svg></Slot>
        <Slot active><svg className="h-[28px] w-[30px]" viewBox="0 0 30 28"><path d="M0 2a1.500 1.500 0 0 1 1.500-1.500h9L14 4v4H0z" fill="#e3a008" /><path d="M0 6h12l2-2.500h14.500A1.500 1.500 0 0 1 30 5v21a1.500 1.500 0 0 1-1.500 1.500h-27A1.500 1.500 0 0 1 0 26z" fill="#fdcf3f" /><path d="M5 27.500V22a2.500 2.500 0 0 1 2.500-2.500h15A2.500 2.500 0 0 1 25 22v5.500z" fill="#1279d2" /><path d="M9 23.500h12" stroke="#0b4f94" strokeWidth="1.500" /></svg></Slot>
        <Slot active><svg className="size-[30px]" viewBox="0 0 30 30"><rect width="30" height="30" rx="3" fill="#da7056" /><path d="M15 15 15.500 4M15 15l5-9.500M15 15l9.500-6M15 15l11-.5M15 15l10 5M15 15l6.500 8.500M15 15l1 11M15 15l-5 9.500M15 15l-9 6M15 15l-11 1M15 15 5.500 9.500M15 15 9 5.500" stroke="#fff" strokeWidth="1.900" strokeLinecap="round" /></svg></Slot>
        <Slot active><svg className="h-[23px] w-[30px]" viewBox="0 0 30 23"><rect width="30" height="23" rx="1.500" fill="#3a3a3c" /><path d="M0 1.500A1.500 1.500 0 0 1 1.500 0H11v4H0z" fill="#c9c9c9" /><path d="M11 0h10v4H11z" fill="#9b9b9b" /><path d="M21 0h7.500A1.500 1.500 0 0 1 30 1.500V4h-9z" fill="#6f6f6f" /><path d="m5 8 5 5-5 5" fill="none" stroke="#d0d0d0" strokeWidth="2.600" /><path d="M13.500 18.500h10" stroke="#fff" strokeWidth="2.600" /></svg></Slot>
        <Slot active><svg className="h-[30px] w-[23px]" viewBox="0 0 23 30"><rect x="0" y="2" width="23" height="27.500" rx="1.500" fill="#52bfe0" /><path d="M0 26.500h23v1.500H0z" fill="#f3f6f8" /><path d="M0 28h23v.5a1.500 1.500 0 0 1-1.500 1.500h-20A1.500 1.500 0 0 1 0 28.500z" fill="#b35c12" /><path d="M3.500 0v4M7.500 0v4M11.500 0v4M15.500 0v4M19.500 0v4" stroke="#0f6a8e" strokeWidth="1.800" /><path d="M4 9h15M4 14h15M4 19h15" stroke="#0f6486" strokeWidth="2" /></svg></Slot>
        <Slot active><CursorMark /></Slot>
      </div>
      <div className="ml-auto flex h-[57px] items-center pr-[24px] text-white">
        <Line className="h-[9px] w-[14px]" box="0 0 14 9" sw={1.8}><path d="m1 8 6-6.500L13 8" /></Line>
        <Line className="ml-[23px] h-[16px] w-[20px]" box="0 0 20 16" sw={1.7}><path d="M1 6.500a12.500 12.500 0 0 1 18 0M4 9.700a8.500 8.500 0 0 1 12 0M7 12.500a4.300 4.300 0 0 1 6 0" /><circle cx="10" cy="14.300" r="1" fill="currentColor" /></Line>
        <Line className="ml-[10px] h-[16px] w-[20px]" box="0 0 20 16" sw={1.5}><path d="M1 5.500h3L9 1.500v13l-5-4H1zM11.500 5.500c1.200 1.500 1.200 3.500 0 5M14 3.500c2.300 2.500 2.300 6.500 0 9" /><path d="M16.800 1.500c3.200 3.500 3.200 9.500 0 13" stroke="#66707c" /></Line>
        <svg className="ml-[10px] h-[16px] w-[20px] shrink-0" viewBox="0 0 20 16"><rect x=".8" y="1.800" width="15.500" height="12.400" rx="3" fill="none" stroke="#fff" strokeWidth="1.500" /><rect x="3" y="4" width="8" height="8" rx="1" fill="#fff" /><path d="M17.500 5.500h1a1 1 0 0 1 1 1v3a1 1 0 0 1-1 1h-1z" fill="#fff" /></svg>
        <div className="ml-[21px] flex flex-col items-end text-[14px] leading-[20px]">
          <span className="tracking-[0.32px]">2:09 AM</span>
          <span className="tracking-[0.24px]">4/23/2025</span>
        </div>
        <Line className="ml-[11px] h-[19px] w-[17px]" box="0 0 17 19" sw={1.5}><path d="M8.500 1a5.700 5.700 0 0 0-5.700 5.700v4L1 14.500c-.2.500.1 1 .6 1h13.800c.5 0 .8-.5.6-1l-1.800-3.800v-4A5.700 5.700 0 0 0 8.500 1zM6 15.500c0 1.500 1 2.500 2.500 2.500s2.500-1 2.500-2.500" /></Line>
      </div>
    </footer>
  );
}

export default function App() {
  return (
    <div className="flex h-[933px] w-[1887px] flex-col overflow-hidden font-['Open_Sans','Noto_Sans',sans-serif]">
      <BookmarksBar />
      <Header />
      <div className="relative flex min-h-0 flex-1 overflow-hidden">
        <Sidebar />
        <Workspace />
        <CreatePanel />
      </div>
      <Taskbar />
    </div>
  );
}
